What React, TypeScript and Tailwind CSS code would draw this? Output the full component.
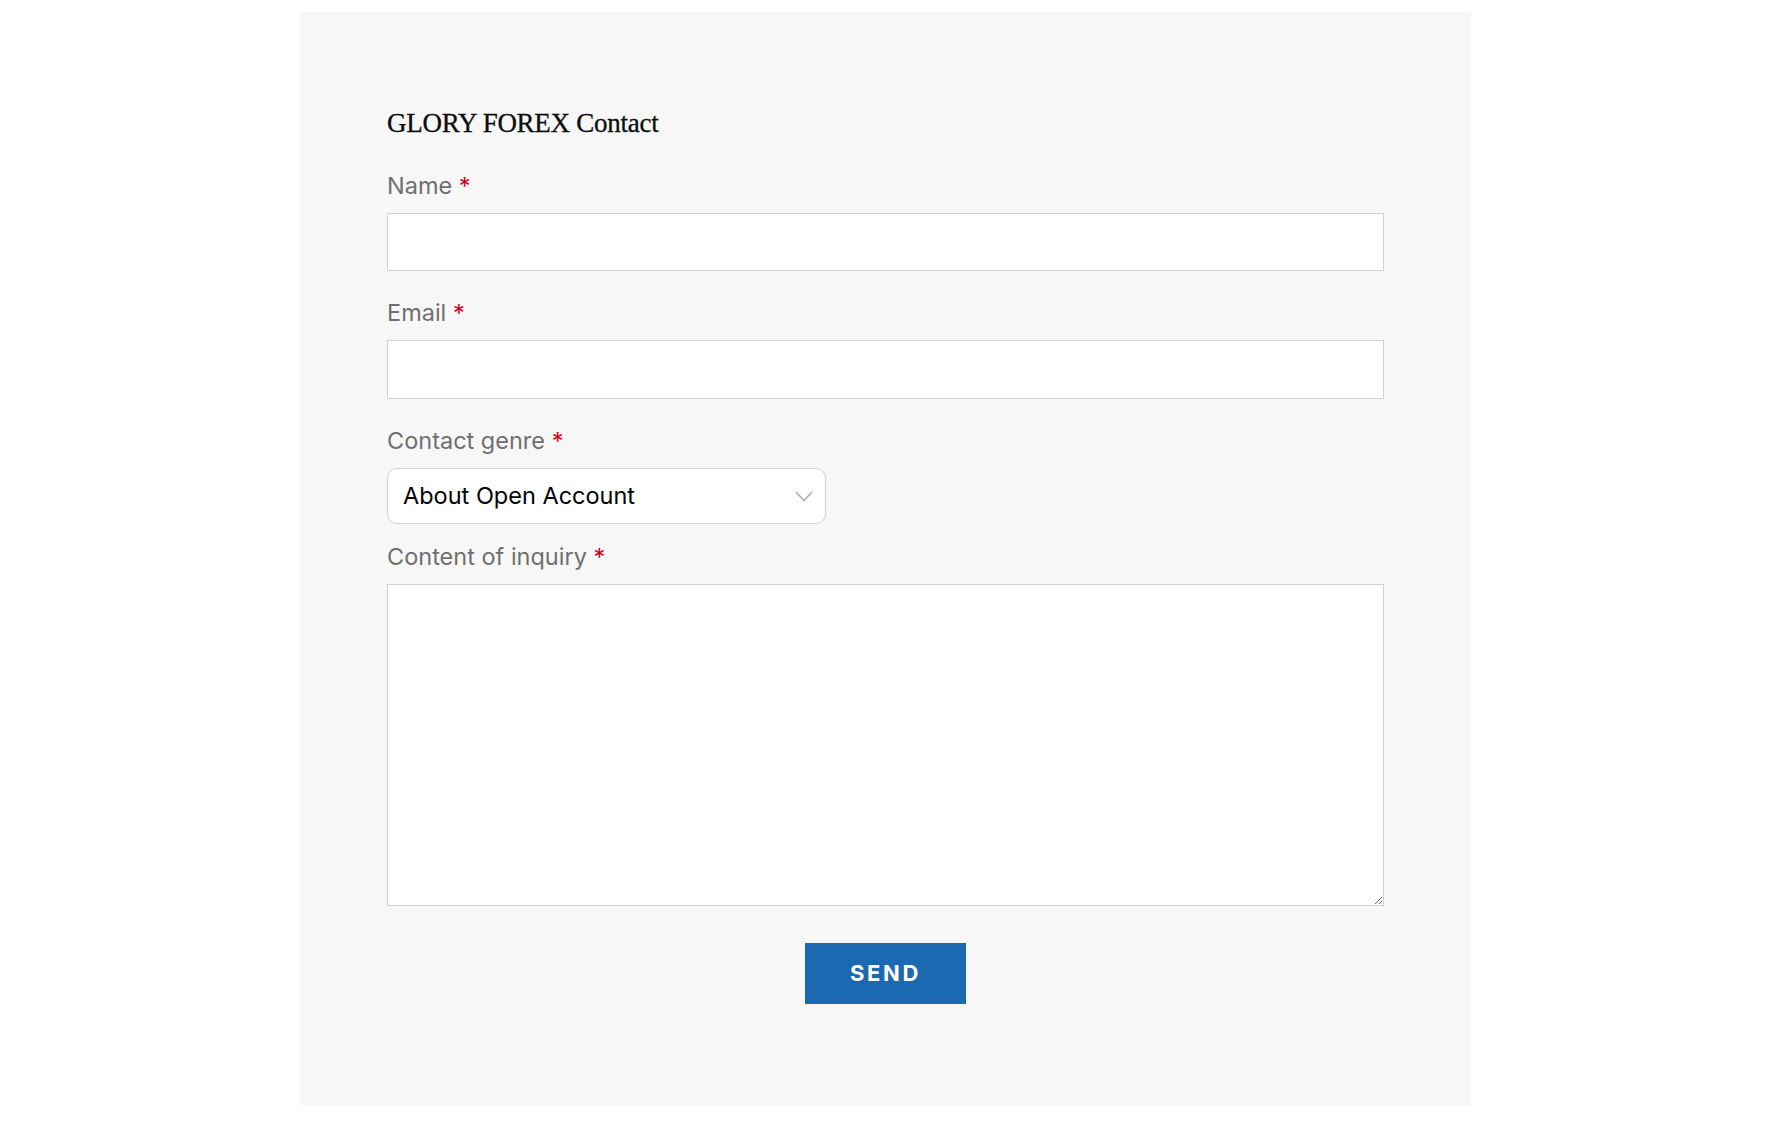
import React from 'react';

const Label = ({ text }: { text: string }) => (
  <label className="block h-[36px] leading-[38px] text-[23.5px] text-[#6f6f6f] mb-[10px]">
    {text} <span className="text-[#d0021b]">*</span>
  </label>
);

const App = () => {
  return (
    <div className="min-h-[1122px] bg-white pt-[12px] font-['Inter','Liberation_Sans',sans-serif]">
      <section className="ml-[300px] w-[1171px] bg-[#f7f7f7] pt-[96px] pb-[101px] px-[87px]">
        <h2 className="font-['Liberation_Serif',serif] text-[27px] leading-[31px] text-[#0d0d0d] tracking-[-0.01em] mb-[28px] [-webkit-text-stroke:0.3px_#0d0d0d]">
          GLORY FOREX Contact
        </h2>

        <form onSubmit={(e) => e.preventDefault()}>
          <div className="mb-[23px]">
            <Label text="Name" />
            <input
              type="text"
              className="block w-full h-[58px] bg-white border border-[#d2d2d2] px-4 text-[22px] outline-none"
            />
          </div>

          <div className="mb-[23px]">
            <Label text="Email" />
            <input
              type="email"
              className="block w-full h-[59px] bg-white border border-[#d2d2d2] px-4 text-[22px] outline-none"
            />
          </div>

          <div className="mb-[14px]">
            <Label text="Contact genre" />
            <div className="relative w-[439px] h-[56px] bg-white border border-[#d2d2d2] rounded-[10px] flex items-center pl-[15px]">
              <span className="text-[23.5px] text-black">About Open Account</span>
              <svg
                className="absolute right-[12px] top-[22px]"
                width="18"
                height="11"
                viewBox="0 0 18 11"
                fill="none"
              >
                <path d="M1 1l8 8.5L17 1" stroke="#a3a3a3" strokeWidth="1.2" />
              </svg>
            </div>
          </div>

          <div>
            <Label text="Content of inquiry" />
            <textarea className="block w-full h-[322px] bg-white border border-[#d2d2d2] p-4 text-[22px] outline-none" />
          </div>

          <div className="flex justify-center mt-[37px]">
            <button
              type="submit"
              className="w-[161px] h-[61px] bg-[#1a69b1] text-white text-[22px] font-bold tracking-[0.12em]"
            >
              SEND
            </button>
          </div>
        </form>
      </section>
    </div>
  );
};

export default App;
